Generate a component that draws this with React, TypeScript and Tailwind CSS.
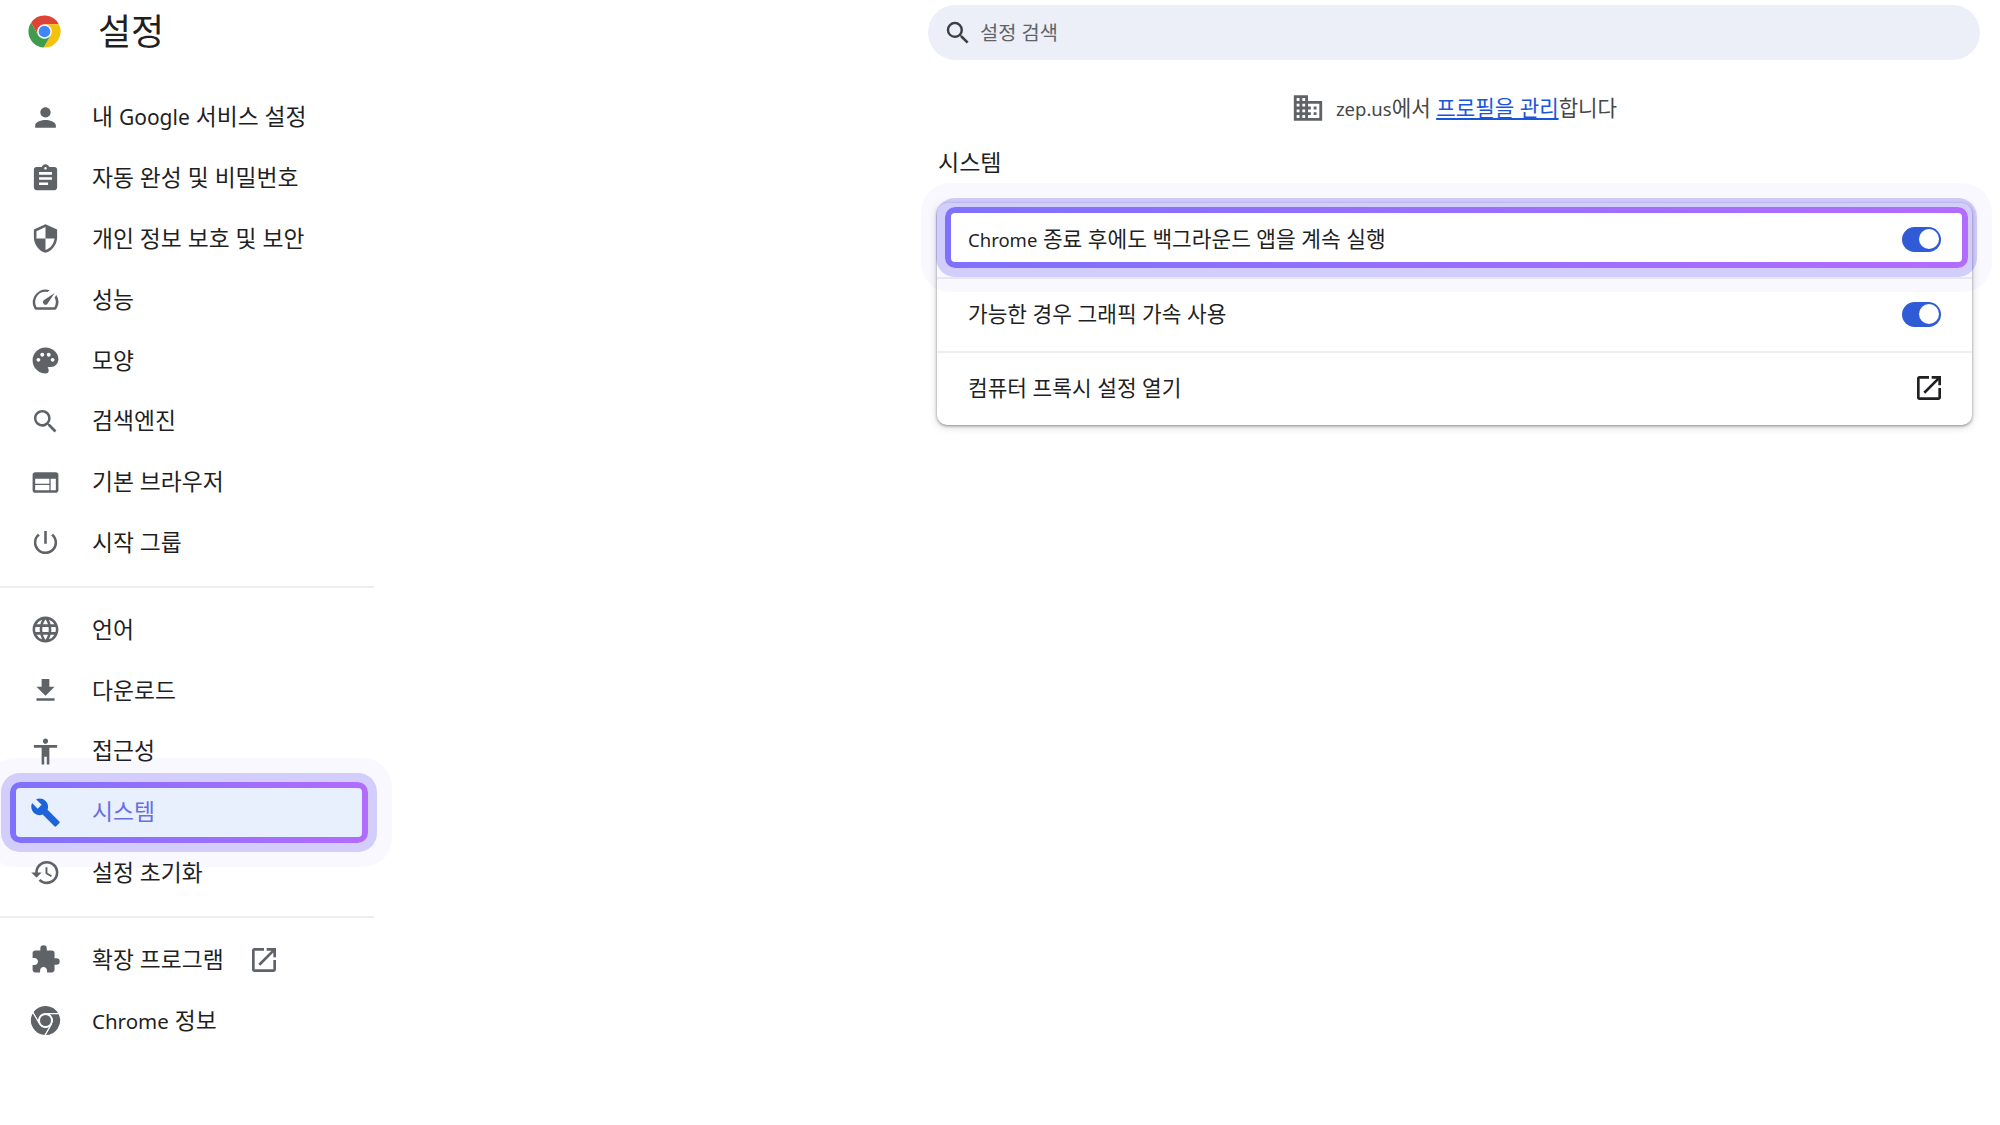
import React from 'react';
import {
  MdPerson, MdAssignment, MdSecurity, MdPalette, MdSearch, MdWeb, MdPowerSettingsNew, MdLanguage,
  MdFileDownload, MdAccessibility, MdBuild, MdRestore, MdExtension, MdOpenInNew, MdDomain,
} from 'react-icons/md';

const FONT = "font-['Noto_Sans','Noto_Sans_CJK_KR',sans-serif]";

// Chrome wheel, flat grey with white slits when no colours are passed
const ChromeMark = ({ size, red = '#5f6368', yellow = '#5f6368', green = '#5f6368', blue = '#5f6368', slit = 'none' }: { size: number; red?: string; yellow?: string; green?: string; blue?: string; slit?: string }) => (
  <svg width={size} height={size} viewBox="0 0 48 48" stroke={slit} strokeWidth="1.6">
    <path fill={red} d="M43.6 14A22 22 0 0 0 5.54 12.03L15.34 29A10 10 0 0 1 24 14Z" />
    <path fill={yellow} d="M22.86 45.97A22 22 0 0 0 43.6 14L24 14A10 10 0 0 1 32.66 29Z" />
    <path fill={green} d="M5.54 12.03A22 22 0 0 0 22.86 45.97L32.66 29A10 10 0 0 1 15.34 29Z" />
    <circle cx="24" cy="24" r="8" fill={blue} stroke="none" />
  </svg>
);

const SpeedIcon = () => (
  <svg width="31" height="31" viewBox="0 0 24 24" fill="#5f6368">
    <path d="M20.4 8.6l-1.3 1.9c.6 1.2.9 2.3.9 3.5 0 1.4-.4 2.8-1.1 4H5.1A8 8 0 0 1 4 14a8 8 0 0 1 9.5-7.9l1.9-1.3A10 10 0 0 0 3.4 19c.4.6 1 1 1.7 1h13.8c.7 0 1.3-.4 1.7-1a10 10 0 0 0-.2-10.4z" />
    <path d="M10.6 15.4a2 2 0 0 0 2.8 0l5.7-8.5-8.5 5.7a2 2 0 0 0 0 2.8z" />
  </svg>
);

const NAV_TOP: { label: React.ReactNode; icon: React.ReactNode }[] = [
  { label: <>내 <span className="text-[21px]">Google</span> 서비스 설정</>, icon: <MdPerson size={31} /> },
  { label: '자동 완성 및 비밀번호', icon: <MdAssignment size={31} /> },
  { label: '개인 정보 보호 및 보안', icon: <MdSecurity size={31} /> },
  { label: '성능', icon: <SpeedIcon /> },
  { label: '모양', icon: <MdPalette size={31} /> },
  { label: '검색엔진', icon: <MdSearch size={31} /> },
  { label: '기본 브라우저', icon: <MdWeb size={31} /> },
  { label: '시작 그룹', icon: <MdPowerSettingsNew size={31} /> },
];

const Toggle = () => (
  <div className="flex h-[25px] w-[39px] items-center justify-end rounded-full bg-[#2f5bd6] pr-[2px]">
    <div className="h-[20px] w-[20px] rounded-full bg-white" />
  </div>
);

const NavRow = ({ icon, label, extra }: { icon: React.ReactNode; label: React.ReactNode; extra?: React.ReactNode }) => (
  <div className="flex h-[60.8px] items-center text-[#1f1f1f]">
    <div className="flex w-[92px] justify-center pr-[1px] text-[#5f6368]">{icon}</div>
    <span className="text-[22.8px] leading-[30px]">{label}</span>
    {extra}
  </div>
);

const Divider = () => <div className="mt-[13px] mb-[11px] h-[2px] bg-[#eceef0]" />;

export default function App() {
  return (
    <div className={`flex min-h-[1125px] bg-white ${FONT}`}>
      {/* Sidebar */}
      <aside className="w-[374px] shrink-0">
        <div className="flex h-[87px] items-start pt-[14px]">
          <div className="ml-[27px] h-[35px] w-[35px]">
            <ChromeMark size={35} red="#db4437" yellow="#f4c20d" green="#3f9c4f" blue="#4285f4" />
          </div>
          <h1 className="ml-[36px] text-[36px] leading-[36px] font-normal text-[#1f1f1f]">설정</h1>
        </div>
        <nav>
          {NAV_TOP.map((item, i) => (
            <NavRow key={i} icon={item.icon} label={item.label} />
          ))}
          <Divider />
          <NavRow icon={<MdLanguage size={31} />} label="언어" />
          <NavRow icon={<MdFileDownload size={31} />} label="다운로드" />
          <NavRow icon={<MdAccessibility size={31} />} label="접근성" />
          {/* Highlighted row sits over its neighbours */}
          <div className="relative z-10 h-[60.8px]">
            <div className="absolute top-0 right-[6px] left-[10px] flex h-[61px] items-center rounded-[10px] border-[6px] border-transparent [background:linear-gradient(#e8f0fe,#e8f0fe)_padding-box,linear-gradient(90deg,#7f71fb,#b26cfe)_border-box] shadow-[0_0_0_9px_rgba(101,83,241,0.26),0_0_0_24px_rgba(101,83,241,0.04)]">
              <div className="w-[76px] pl-[14px] text-[#1f63d8]">
                <MdBuild size={31} />
              </div>
              <span className="text-[22.8px] leading-[30px] text-[#6a6fe0]">시스템</span>
            </div>
          </div>
          <NavRow icon={<MdRestore size={31} />} label="설정 초기화" />
          <Divider />
          <NavRow
            icon={<MdExtension size={31} />}
            label="확장 프로그램"
            extra={<MdOpenInNew size={32} className="ml-[24px] text-[#5f6368]" />}
          />
          <NavRow icon={<ChromeMark size={33} slit="#fff" />} label={<><span className="text-[20.5px]">Chrome</span> 정보</>} />
        </nav>
      </aside>

      {/* Main column */}
      <main className="ml-[554px] flex w-[1052px] flex-col pt-[5px]">
        <div className="flex h-[55px] items-center rounded-full bg-[#eceff7] pl-[15px] text-[#1f1f1f]">
          <MdSearch size={30} className="text-[#3c4043]" />
          <span className="ml-[7px] text-[19.8px] text-[#5f6368]">설정 검색</span>
        </div>
        <div className="mt-[32px] flex h-[34px] items-center justify-center pb-[2px] text-[21.2px] text-[#474747]">
          <MdDomain size={34} className="text-[#5f6368]" />
          <span className="ml-[11px]">
            <span className="text-[18.5px]">zep.us</span>에서 <span className="text-[#1a56db] underline">프로필을 관리</span>합니다
          </span>
        </div>
        <h2 className="mt-[21px] ml-[10px] text-[23px] leading-[30px] font-normal text-[#1f1f1f]">시스템</h2>

        <section className="mt-[26px] mr-[8px] ml-[9px] rounded-[10px] bg-white shadow-[0_1px_3px_rgba(60,64,67,0.55),0_2px_8px_rgba(60,64,67,0.2)]">
          <div className="relative z-10 h-[74px]">
            <div className="absolute top-[4px] right-[4px] left-[8px] flex h-[61px] items-center justify-between rounded-[10px] border-[6px] border-transparent pt-[3px] pr-[21px] pl-[17px] [background:linear-gradient(#fff,#fff)_padding-box,linear-gradient(90deg,#7f71fb,#b26cfe)_border-box] shadow-[0_0_0_9px_rgba(101,83,241,0.26),0_0_0_24px_rgba(101,83,241,0.04)]">
              <span className="text-[21.4px] leading-[28px] text-[#1f1f1f]"><span className="text-[18.5px]">Chrome</span> 종료 후에도 백그라운드 앱을 계속 실행</span>
              <Toggle />
            </div>
          </div>
          <div className="flex h-[74px] items-center justify-between border-t-2 border-[#eceef0] pr-[31px] pb-[2px] pl-[31px]">
            <span className="text-[21.4px] leading-[28px] text-[#1f1f1f]">가능한 경우 그래픽 가속 사용</span>
            <Toggle />
          </div>
          <div className="flex h-[74px] items-center justify-between border-t-2 border-[#eceef0] pr-[27px] pb-[2px] pl-[31px]">
            <span className="text-[21.4px] leading-[28px] text-[#1f1f1f]">컴퓨터 프록시 설정 열기</span>
            <MdOpenInNew size={32} className="text-[#202124]" />
          </div>
        </section>
      </main>
    </div>
  );
}
